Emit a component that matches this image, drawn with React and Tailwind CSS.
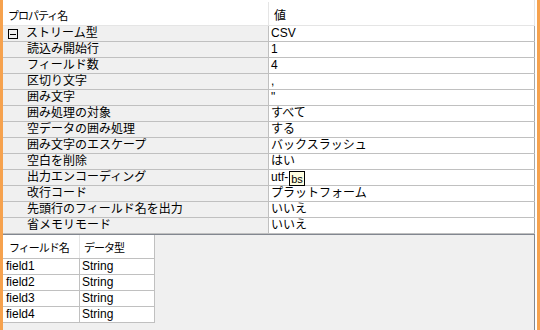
const FONT = { fontFamily: '"Liberation Sans", "Noto Sans CJK JP", sans-serif' };

const ROWS = [
  ['読込み開始行', '1'],
  ['フィールド数', '4'],
  ['区切り文字', ','],
  ['囲み文字', '"'],
  ['囲み処理の対象', 'すべて'],
  ['空データの囲み処理', 'する'],
  ['囲み文字のエスケープ', 'バックスラッシュ'],
  ['空白を削除', 'はい'],
  ['出力エンコーディング', 'utf-', true],
  ['改行コード', 'プラットフォーム'],
  ['先頭行のフィールド名を出力', 'いいえ'],
  ['省メモリモード', 'いいえ'],
];

const FIELDS = ['field1', 'field2', 'field3', 'field4'];

function CollapseIcon() {
  return (
    <svg width="10" height="10" viewBox="0 0 10 10" className="shrink-0">
      <rect x="0.5" y="0.5" width="9" height="9" fill="none" stroke="#000" strokeWidth="1" />
      <line x1="2" y1="5.5" x2="8" y2="5.5" stroke="#000" strokeWidth="1" />
    </svg>
  );
}

function PropRow({ name, value, tooltip, category }) {
  return (
    <div className="flex h-[16px] border-b border-[#c0c0c0]">
      <div className="flex w-[265px] items-center bg-[#f0f0f0]">
        {category ? (
          <div className="flex items-center pl-[5px]">
            <CollapseIcon />
            <span className="whitespace-nowrap pl-[8px] leading-[15px]">{name}</span>
          </div>
        ) : (
          <span className="whitespace-nowrap pl-[24px] leading-[15px]">{name}</span>
        )}
      </div>
      <div className="w-px bg-[#c0c0c0]" />
      <div className="relative flex w-[266px] items-center border-r border-[#a8a8a8] bg-white pl-[2px]">
        <span className="leading-[15px]">{value}</span>
        {tooltip ? (
          <div className="absolute left-[20px] top-[1px] z-10 flex h-[15px] w-[16px] items-end justify-center border border-black bg-[#ffffe1] text-[11px] leading-[12px]">
            bs
          </div>
        ) : null}
      </div>
    </div>
  );
}

function HeadLabel({ children }) {
  return (
    <span className="whitespace-nowrap text-[11px] leading-[15px] tracking-[-1px]">{children}</span>
  );
}

export default function App() {
  return (
    <div className="flex h-[330px] w-[540px] bg-white text-[12px] text-black" style={FONT}>
      <div className="w-[3px] bg-[#f6a24e]" />

      <div className="flex w-[532px] flex-col">
        <div className="flex h-[26px] border-b border-[#e5e5e5] bg-white">
          <div className="flex w-[265px] items-end pb-[1px] pl-[5px]">
            <HeadLabel>プロパティ名</HeadLabel>
          </div>
          <div className="mt-[2px] w-px bg-[#e5e5e5]" />
          <div className="flex w-[266px] items-end border-r border-[#e5e5e5] pb-[1px] pl-[5px]">
            <span className="text-[12px] leading-[15px]">値</span>
          </div>
        </div>

        <PropRow name="ストリーム型" value="CSV" category />
        {ROWS.map(([name, value, tooltip]) => (
          <PropRow key={name} name={name} value={value} tooltip={tooltip} />
        ))}

        <div className="flex-1 border-t border-r border-[#828790] bg-[#f0f0f0]">
          <div className="w-[152px]">
            <div className="flex h-[24px] border-b border-[#c0c0c0] bg-white">
              <div className="flex w-[76px] items-center pl-[6px] pt-[3px]">
                <HeadLabel>フィールド名</HeadLabel>
              </div>
              <div className="w-px bg-[#e5e5e5]" />
              <div className="flex flex-1 items-center border-r border-[#c0c0c0] pl-[4px] pt-[3px]">
                <HeadLabel>データ型</HeadLabel>
              </div>
            </div>
            {FIELDS.map((field) => (
              <div key={field} className="flex h-[16px] border-b border-[#c0c0c0] bg-white">
                <div className="flex w-[76px] items-center pl-[3px]">
                  <span className="leading-[15px]">{field}</span>
                </div>
                <div className="w-px bg-[#c0c0c0]" />
                <div className="flex flex-1 items-center border-r border-[#c0c0c0] pl-[2px]">
                  <span className="leading-[15px]">String</span>
                </div>
              </div>
            ))}
          </div>
        </div>
      </div>

      <div className="w-[2px] bg-white" />
      <div className="w-[3px] bg-[#f6a24e]" />
    </div>
  );
}
